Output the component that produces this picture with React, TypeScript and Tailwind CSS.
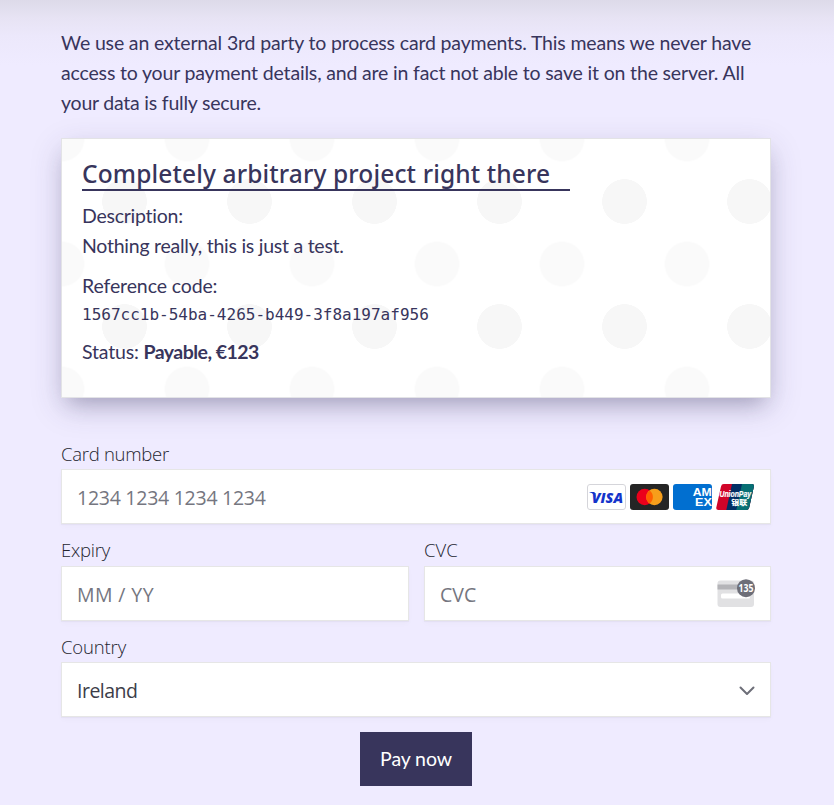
import type { ReactNode } from 'react';

const body = "font-['Lato',sans-serif] text-[#38355c]";

function Line({ className = '', children }: { className?: string; children: ReactNode }) {
  return <span className={`block whitespace-nowrap ${className}`}>{children}</span>;
}

function Visa() {
  return (
    <svg width="39" height="26" viewBox="0 0 39 26">
      <rect x=".5" y=".5" width="38" height="25" rx="2.5" fill="#fff" stroke="#d5d5da" />
      <path d="M2.400 8.100h4.100c.9 0 1.300.4 1.500 1.200l.9 4.400C7.800 11 5.700 9.100 2.400 8.300z" fill="#1434cb" />
      <text x="4.800" y="18.500" textLength="31.200" lengthAdjust="spacingAndGlyphs" fontFamily="Open Sans, sans-serif" fontWeight="800" fontStyle="italic" fontSize="14.800" fill="#1434cb">VISA</text>
    </svg>
  );
}

function Mastercard() {
  return (
    <svg width="39" height="26" viewBox="0 0 39 26">
      <rect width="39" height="26" rx="3" fill="#252525" />
      <circle cx="14.700" cy="13" r="8.200" fill="#eb001b" />
      <circle cx="24.400" cy="13" r="8.200" fill="#f79e1b" />
      <path d="M19.550 6.400a8.200 8.200 0 0 1 0 13.200a8.200 8.200 0 0 1 0-13.200z" fill="#ff5f00" />
    </svg>
  );
}

function Amex() {
  return (
    <svg width="39" height="26" viewBox="0 0 39 26">
      <rect width="39" height="26" rx="3" fill="#016fd0" />
      <g fill="#fff" fontFamily="Liberation Sans, sans-serif" fontWeight="700" fontSize="10.500">
        <text x="19.800" y="12.400" textLength="19" lengthAdjust="spacingAndGlyphs">AM</text>
        <text x="22" y="22" textLength="16.800" lengthAdjust="spacingAndGlyphs">EX</text>
      </g>
    </svg>
  );
}

function UnionPay() {
  return (
    <svg width="39" height="26" viewBox="0 0 39 26">
      <defs>
        <clipPath id="unionpay"><path d="M7.800 0h28.200q2.400 0 1.900 2.400l-4.700 21.200q-.6 2.400-3 2.400H2.400Q-.2 26 .3 23.600L5 2.400Q5.500 0 7.800 0z" /></clipPath>
      </defs>
      <g clipPath="url(#unionpay)">
        <rect width="39" height="26" fill="#d10429" />
        <path d="M16 0h23v26H10.300z" fill="#022e64" />
        <path d="M26 0h13v26H20.300z" fill="#076f74" />
      </g>
      <text x="3.500" y="12.500" textLength="31.500" lengthAdjust="spacingAndGlyphs" fontFamily="Liberation Sans, sans-serif" fontWeight="700" fontStyle="italic" fontSize="8.500" fill="#fff" stroke="#fff" strokeWidth=".2">UnionPay</text>
      <text x="15.300" y="21" textLength="16" lengthAdjust="spacingAndGlyphs" fontFamily="Noto Sans CJK SC, sans-serif" fontWeight="900" fontSize="7" fill="#fff">银联</text>
    </svg>
  );
}

function CvcIcon() {
  return (
    <svg width="38" height="30" viewBox="0 0 38 30">
      <rect x=".5" y="1.500" width="36.500" height="26.500" rx="3" fill="#e1e1e3" />
      <rect x=".5" y="5.500" width="36.500" height="5" fill="#b4b4b8" />
      <rect x="4" y="14.500" width="29" height="5" rx="1.500" fill="#fff" />
      <circle cx="29" cy="9.200" r="9" fill="#6d6e78" />
      <text x="21.600" y="12.800" textLength="14.800" lengthAdjust="spacingAndGlyphs" fontFamily="Open Sans, sans-serif" fontWeight="700" fontSize="10" fill="#fff">135</text>
    </svg>
  );
}

function Field({ label, value, className = '', labelClass = 'leading-[33px]', valueClass, children }: { label: string; value: string; className?: string; labelClass?: string; valueClass: string; children?: ReactNode }) {
  return (
    <div className={`font-['Open_Sans',sans-serif] ${className}`}>
      <div className={`h-[32px] text-[18.500px] font-[350] text-[#24252f] ${labelClass}`}>{label}</div>
      <div className="flex h-[55px] items-center justify-between border border-[#e6e6e6] bg-white pl-[15px] shadow-[0_1px_1px_rgba(0,0,0,0.03),0_3px_6px_rgba(0,0,0,0.02)]">
        <span className={`pt-[3px] whitespace-nowrap text-[19.500px] ${valueClass}`}>{value}</span>
        {children}
      </div>
    </div>
  );
}

export default function App() {
  return (
    <main className={`h-[805px] overflow-hidden bg-[#efebff] bg-[linear-gradient(to_bottom,#dddae9_0px,#e7e3f4_18px,#ece8fb_36px,#efebff_65px)] px-[61px] pt-[28px] ${body}`}>
      <p className="w-[712px] text-[19.500px] leading-[30px]">
        <Line className="tracking-[-0.160px]">We use an external 3rd party to process card payments. This means we never have</Line>
        <Line className="tracking-[-0.165px]">access to your payment details, and are in fact not able to save it on the server. All</Line>
        <Line className="tracking-[-0.220px]">your data is fully secure.</Line>
      </p>

      <section className="mt-[20px] h-[260px] w-[710px] border border-[#e3e3e6] bg-white bg-[radial-gradient(#f7f7f7_25%,transparent_25.5%),radial-gradient(#fafafa_25%,transparent_25.5%)] bg-[length:125px_125px] bg-[position:0_0,62.500px_62.500px] p-[20px] shadow-[0_10px_30px_rgba(56,52,92,0.18),0_12px_20px_-8px_rgba(56,52,92,0.3)]">
        <h2 className="h-[32px] w-[488px] border-b-2 border-[#38355c] font-['Noto_Sans',sans-serif] text-[24.500px] leading-[30px] font-medium tracking-[0.140px] whitespace-nowrap">Completely arbitrary project right there</h2>
        <div className="mt-[10px] text-[19.500px] leading-[30px]">
          <Line className="tracking-[-0.250px]">Description:</Line>
          <Line className="tracking-[-0.250px]">Nothing really, this is just a test.</Line>
        </div>
        <div className="mt-[10px] text-[19.500px] leading-[30px]">
          <Line className="tracking-[-0.120px]">Reference code:</Line>
          <Line className="h-[26px] font-['DejaVu_Sans_Mono',monospace] text-[16px] leading-[27px]">1567cc1b-54ba-4265-b449-3f8a197af956</Line>
        </div>
        <div className="mt-[10px] text-[19.500px] leading-[30px]">
          <Line className="tracking-[-0.170px]">Status: <b className="tracking-[-0.530px]">Payable, €123</b></Line>
        </div>
      </section>

      <form className="mt-[39px] w-[710px]">
        <Field label="Card number" value="1234 1234 1234 1234" labelClass="leading-[33px] tracking-[-0.270px]" valueClass="font-[380] tracking-[-0.260px] text-[#757680]">
          <div className="mr-[15px] flex gap-[4px]">
            <Visa />
            <Mastercard />
            <Amex />
            <UnionPay />
          </div>
        </Field>
        <div className="mt-[10px] flex gap-[15px]">
          <Field label="Expiry" value="MM / YY" className="w-[348px]" labelClass="leading-[31px] tracking-[-0.200px]" valueClass="font-[380] tracking-[0.400px] text-[#757680]" />
          <Field label="CVC" value="CVC" className="w-[347px]" labelClass="leading-[31px]" valueClass="font-[380] text-[#757680]">
            <div className="mr-[15px]"><CvcIcon /></div>
          </Field>
        </div>
        <div className="mt-[9px]">
          <Field label="Country" value="Ireland" labelClass="leading-[33px] tracking-[-0.150px]" valueClass="font-[380] tracking-[-0.500px] text-[#3c3d49]">
            <svg className="mt-[2px] mr-[15px]" width="16" height="10" viewBox="0 0 16 10" fill="none" stroke="#6d6e78" strokeWidth="2" strokeLinecap="round" strokeLinejoin="round">
              <path d="M1.500 1.500L8 8l6.500-6.500" />
            </svg>
          </Field>
        </div>
        <button type="button" className="mx-auto mt-[15px] block h-[54px] w-[112px] bg-[#38355c] text-[19.500px] tracking-[-0.100px] text-white">Pay now</button>
      </form>
    </main>
  );
}
